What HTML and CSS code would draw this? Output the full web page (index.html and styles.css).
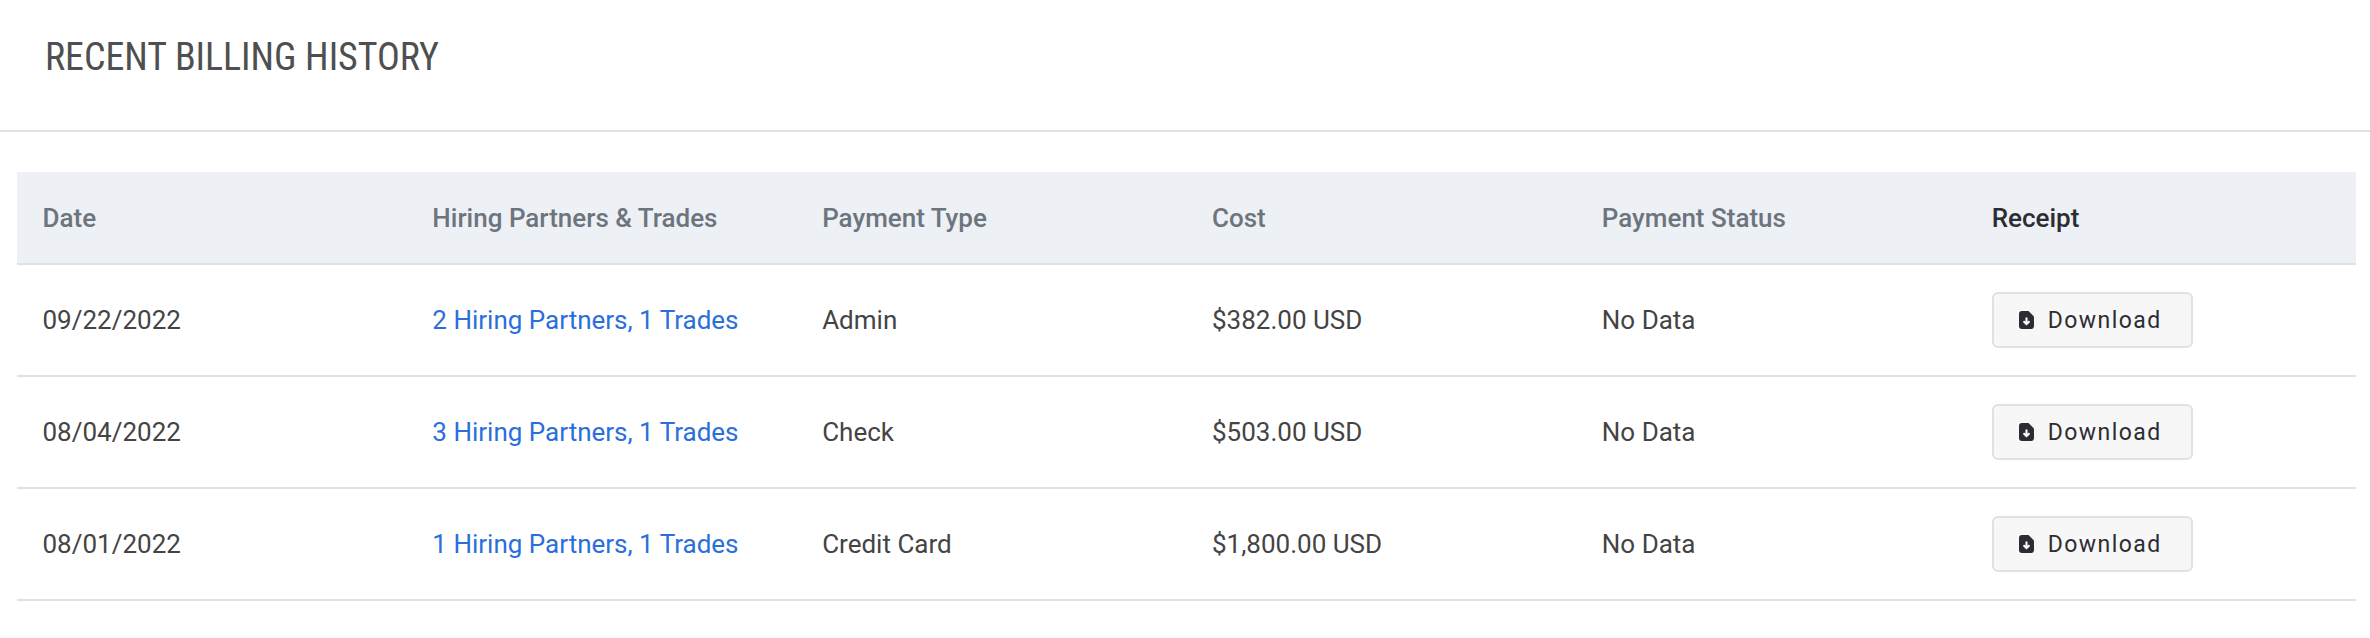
FILE: index.html
```html
<!DOCTYPE html>
<html lang="en">
<head>
<meta charset="utf-8">
<title>Recent Billing History</title>
<link rel="stylesheet" href="styles.css">
</head>
<body>
<header class="card-header"><h2 class="card-title">RECENT BILLING HISTORY</h2></header>
<div class="table-wrap">
<table class="billing">
<thead>
<tr><th>Date</th><th>Hiring Partners &amp; Trades</th><th>Payment Type</th><th>Cost</th><th>Payment Status</th><th class="dark">Receipt</th></tr>
</thead>
<tbody>
<tr><td>09/22/2022</td><td><a class="link" href="#">2 Hiring Partners, 1 Trades</a></td><td>Admin</td><td>$382.00 USD</td><td>No Data</td>
<td><button class="btn"><svg class="ico" viewBox="0 0 15 18"><path d="M3 0H9.5L15 5.5V15a3 3 0 0 1-3 3H3a3 3 0 0 1-3-3V3a3 3 0 0 1 3-3Z" fill="#2b2d33"/><path d="M7.5 6.5V13M4.5 10.2l3 3 3-3" fill="none" stroke="#fff" stroke-width="2"/></svg>Download</button></td></tr>
<tr><td>08/04/2022</td><td><a class="link" href="#">3 Hiring Partners, 1 Trades</a></td><td>Check</td><td>$503.00 USD</td><td>No Data</td>
<td><button class="btn"><svg class="ico" viewBox="0 0 15 18"><path d="M3 0H9.5L15 5.5V15a3 3 0 0 1-3 3H3a3 3 0 0 1-3-3V3a3 3 0 0 1 3-3Z" fill="#2b2d33"/><path d="M7.5 6.5V13M4.5 10.2l3 3 3-3" fill="none" stroke="#fff" stroke-width="2"/></svg>Download</button></td></tr>
<tr><td>08/01/2022</td><td><a class="link" href="#">1 Hiring Partners, 1 Trades</a></td><td>Credit Card</td><td>$1,800.00 USD</td><td>No Data</td>
<td><button class="btn"><svg class="ico" viewBox="0 0 15 18"><path d="M3 0H9.5L15 5.5V15a3 3 0 0 1-3 3H3a3 3 0 0 1-3-3V3a3 3 0 0 1 3-3Z" fill="#2b2d33"/><path d="M7.5 6.5V13M4.5 10.2l3 3 3-3" fill="none" stroke="#fff" stroke-width="2"/></svg>Download</button></td></tr>
</tbody>
</table>
</div>
</body>
</html>
```
FILE: styles.css
```css
* { box-sizing: border-box; }
html, body { margin: 0; background: #fff; }
body { font-family: Roboto, "Liberation Sans", sans-serif; color: #444; height: 638px; overflow: hidden; }
.card-header { height: 132px; border-bottom: 2px solid #dee2e6; padding: 0 45px; display: flex; align-items: center; }
.card-title { margin: 0 0 16px; font-size: 38px; font-weight: 400; font-stretch: 75%; letter-spacing: -0.05px; color: #4f4f4f; line-height: 1; }
.table-wrap { padding: 40px 14px 0 17px; }
.billing { width: 100%; table-layout: fixed; border-collapse: collapse; font-size: 26px; }
.billing th { height: 92px; background: #edf0f5; border-bottom: 2px solid #dee2e6; padding: 0 25.5px; text-align: left; font-weight: 500; color: #6c757d; }
.billing th.dark { color: #2b2d33; }
.billing td { height: 112px; border-bottom: 2px solid #dee2e6; padding: 0 25.5px; }
.link { color: #2a6fdb; text-decoration: none; }
.btn { display: inline-flex; align-items: center; width: 201px; height: 56px; padding: 0 0 0 25px; background: #f7f7f8; border: 2px solid #dee2e6; border-radius: 6px; font: 400 23px Roboto, sans-serif; letter-spacing: 1.45px; color: #2b2d33; }
.ico { width: 15px; height: 18px; margin-right: 14px; }
```
